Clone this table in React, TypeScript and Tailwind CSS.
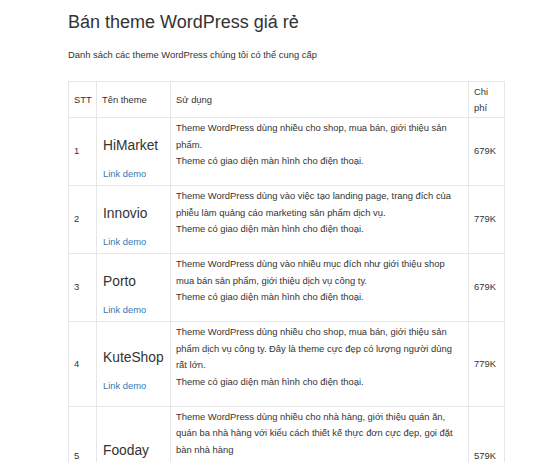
const themes = [
  {
    id: 1,
    name: 'HiMarket',
    lines: [
      'Theme WordPress dùng nhiều cho shop, mua bán, giới thiệu sản',
      'phẩm.',
      'Theme có giao diện màn hình cho điện thoại.',
    ],
    price: '679K',
  },
  {
    id: 2,
    name: 'Innovio',
    lines: [
      'Theme WordPress dùng vào việc tạo landing page, trang đích của',
      'phiễu làm quảng cáo marketing sản phẩm dịch vụ.',
      'Theme có giao diện màn hình cho điện thoại.',
    ],
    price: '779K',
  },
  {
    id: 3,
    name: 'Porto',
    lines: [
      'Theme WordPress dùng vào nhiều mục đích như giới thiệu shop',
      'mua bán sản phẩm, giới thiệu dịch vụ công ty.',
      'Theme có giao diện màn hình cho điện thoại.',
    ],
    price: '679K',
  },
  {
    id: 4,
    name: 'KuteShop',
    lines: [
      'Theme WordPress dùng nhiều cho shop, mua bán, giới thiệu sản',
      'phẩm dịch vụ công ty. Đây là theme cực đẹp có lượng người dùng',
      'rất lớn.',
      'Theme có giao diện màn hình cho điện thoại.',
    ],
    price: '779K',
  },
  {
    id: 5,
    name: 'Fooday',
    lines: [
      'Theme WordPress dùng nhiều cho nhà hàng, giới thiệu quán ăn,',
      'quán ba nhà hàng với kiểu cách thiết kế thực đơn cực đẹp, gọi đặt',
      'bàn nhà hàng',
      'Theme có giao diện màn hình cho điện thoại.',
      '\u00a0',
    ],
    price: '579K',
  },
];

export default function App() {
  return (
    <div className="min-h-screen bg-white pl-[68px] pt-[12px] text-[#333] font-['Liberation_Sans',Arial,sans-serif]">
      <h1 className="text-[18px] leading-[20px] font-normal mb-[15px]">Bán theme WordPress giá rẻ</h1>
      <p className="text-[9.4px] leading-[16px] mb-[18px]">
        Danh sách các theme WordPress chúng tôi có thể cung cấp
      </p>

      {/* Theme table */}
      <table className="table-fixed border-collapse w-[436px] text-[9.4px] leading-[16.5px]">
        <colgroup>
          <col className="w-[28px]" />
          <col className="w-[74px]" />
          <col className="w-[298px]" />
          <col className="w-[36px]" />
        </colgroup>
        <thead>
          <tr>
            <th className="border border-[#e6e6e6] px-[5px] py-[1.5px] text-left font-normal align-middle leading-[16px]">STT</th>
            <th className="border border-[#e6e6e6] px-[5px] py-[1.5px] text-left font-normal align-middle leading-[16px]">Tên theme</th>
            <th className="border border-[#e6e6e6] px-[5px] py-[1.5px] text-left font-normal align-middle leading-[16px]">Sử dụng</th>
            <th className="border border-[#e6e6e6] px-[5px] py-[1.5px] text-left font-normal align-middle leading-[16px]">Chi phí</th>
          </tr>
        </thead>
        <tbody>
          {themes.map((t) => (
            <tr key={t.id}>
              <td className="border border-[#e6e6e6] px-[5px] py-[2px] align-middle">{t.id}</td>
              <td className="border border-[#e6e6e6] pl-[6px] pr-[4px] py-[2px] align-middle">
                <h3 className="text-[13.8px] leading-[16.5px] font-normal mt-[17px] mb-[12px] whitespace-nowrap">{t.name}</h3>
                <a href="#" className="block text-[#337ab7]">Link demo</a>
              </td>
              <td className="border border-[#e6e6e6] px-[5px] pt-[2px] pb-[15.5px] align-top">
                {t.lines.map((line, i) => (
                  <div key={i} className="whitespace-nowrap">{line}</div>
                ))}
              </td>
              <td className="border border-[#e6e6e6] px-[5px] py-[2px] align-middle whitespace-nowrap">{t.price}</td>
            </tr>
          ))}
        </tbody>
      </table>
    </div>
  );
}
